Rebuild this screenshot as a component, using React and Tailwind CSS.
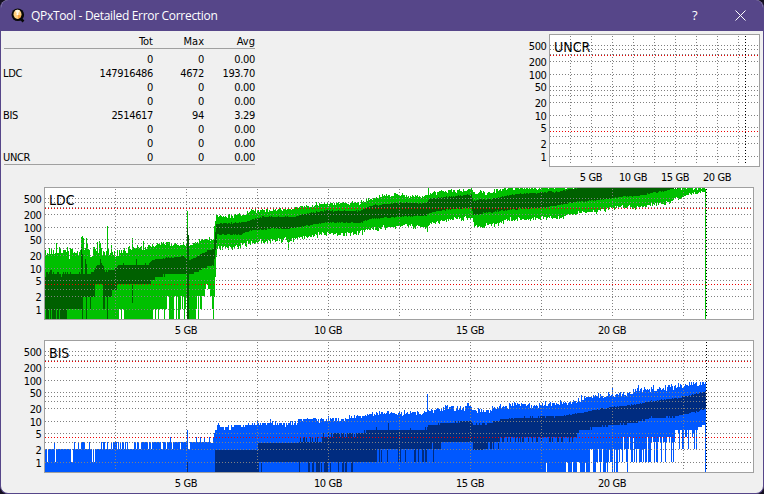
import React from 'react';

const TICKS = [
    {y: 11, label: '500'},
    {y: 15},
    {y: 20},
    {y: 27, label: '200'},
    {y: 40, label: '100'},
    {y: 52, label: '50'},
    {y: 56},
    {y: 61},
    {y: 68, label: '20'},
    {y: 81, label: '10'},
    {y: 93, label: '5'},
    {y: 102},
    {y: 109, label: '2'},
    {y: 122, label: '1'},
];
const LIMITS = [21, 97];
const FLOOR = 132;

const errorRows = [
    {name: '', tot: '0', max: '0', avg: '0.00'},
    {name: 'LDC', tot: '147916486', max: '4672', avg: '193.70'},
    {name: '', tot: '0', max: '0', avg: '0.00'},
    {name: '', tot: '0', max: '0', avg: '0.00'},
    {name: 'BIS', tot: '2514617', max: '94', avg: '3.29'},
    {name: '', tot: '0', max: '0', avg: '0.00'},
    {name: '', tot: '0', max: '0', avg: '0.00'},
    {name: 'UNCR', tot: '0', max: '0', avg: '0.00'},
];

// Curves are [x, y] knots; levels are [from, to, candidate heights]; spikes are {x: y}
const ldc = {
    from: 1,
    to: 661,
    light: '#00c000',
    dark: '#006000',
    top: {
        seed: 7,
        knots: [[1, 64], [70, 65], [76, 65], [85, 61], [104, 61], [116, 57], [141, 57], [146, 58], [156, 54], [166, 52], [169, 52], [170, 41], [172, 29], [194, 29], [205, 25], [222, 23], [250, 22], [262, 20], [276, 17], [315, 16], [326, 12], [341, 9], [356, 8], [366, 9], [381, 10], [386, 7], [396, 5], [416, 4], [427, 3], [429, 6], [446, 6], [456, 3], [471, 1], [661, 1]],
        noise: [[1, 8], [75, 6], [105, 3], [170, 2.5], [661, 2.5]],
        spikes: {12: 56, 25: 72, 37: 50, 38: 49, 39: 51, 42: 51, 43: 57, 53: 55, 55: 54, 56: 56, 63: 39, 67: 58, 88: 51, 99: 54, 143: 24, 144: 48, 338: 7, 358: 6, 384: 1, 427: 1},
    },
    upper: {
        seed: 21,
        knots: [[1, 87], [35, 87], [44, 88], [50, 84], [52, 79], [58, 77], [60, 84], [69, 84], [74, 78], [104, 78], [108, 73], [121, 71], [138, 69], [146, 73], [156, 68], [163, 64], [169, 62], [172, 37], [196, 36], [206, 34], [218, 30], [250, 30], [266, 26], [281, 24], [316, 24], [326, 19], [356, 16], [366, 16], [381, 17], [386, 12], [406, 10], [427, 8], [429, 14], [451, 12], [466, 8], [496, 6], [511, 5], [531, 2], [541, 1], [661, 1]],
        noise: [[1, 4], [50, 1], [661, 1]],
        spikes: {37: 60, 38: 67, 41: 72, 42: 77, 56: 72, 92: 72, 143: 41, 144: 48},
    },
    lower: {
        seed: 5,
        knots: [[1, 122], [38, 122], [39, 109], [50, 109], [51, 98], [58, 98], [61, 109], [67, 109], [68, 102], [81, 97], [106, 97], [108, 93], [116, 90], [126, 88], [146, 89], [156, 83], [163, 80], [169, 79], [171, 64], [173, 48], [196, 48], [206, 44], [226, 42], [246, 42], [261, 39], [281, 36], [316, 36], [326, 32], [356, 30], [381, 29], [386, 26], [401, 23], [427, 21], [429, 28], [456, 24], [476, 22], [501, 21], [511, 19], [533, 15], [556, 13], [576, 10], [596, 9], [616, 5], [636, 1], [661, 1]],
        noise: [[1, 0.4], [50, 0.8], [661, 1]],
        levels: [[1, 23, [122, 132, 132]], [24, 36, [122]]],
        spikes: {37: 122, 38: 132, 42: 132, 46: 122, 59: 122, 60: 122, 63: 132, 88: 116, 143: 132, 144: 132},
    },
    bottom: {
        seed: 13,
        knots: [[1, 132], [169, 132], [170, 109], [172, 72], [173, 60], [186, 62], [196, 60], [206, 56], [226, 54], [250, 53], [256, 51], [276, 48], [311, 47], [326, 43], [356, 39], [366, 39], [383, 41], [386, 37], [406, 33], [428, 31], [430, 40], [451, 38], [456, 35], [466, 33], [501, 31], [516, 31], [531, 27], [556, 24], [576, 20], [591, 21], [606, 18], [621, 17], [631, 12], [646, 8], [661, 4]],
        noise: [[1, 0], [173, 3.5], [520, 3], [620, 3], [661, 1]],
        levels: [[108, 122, [132, 132, 122]], [122, 142, [109, 132, 122, 132]], [145, 150, [132]], [151, 157, [122, 109, 132]], [157, 168, [109, 122, 97, 102]]],
        spikes: {75: 122, 76: 122, 78: 122, 79: 122, 244: 63, 383: 45, 661: 132},
    },
};

const bis = {
    from: 1,
    to: 661,
    light: '#0058ff',
    dark: '#002c80',
    top: {
        seed: 31,
        knots: [[1, 109], [168, 102], [169, 97], [173, 88], [174, 84], [178, 88], [196, 87], [211, 84], [251, 84], [256, 80], [276, 80], [304, 79], [316, 76], [332, 73], [356, 73], [376, 73], [386, 71], [396, 68], [420, 68], [424, 65], [428, 68], [431, 71], [446, 70], [456, 67], [471, 65], [496, 65], [516, 63], [536, 61], [546, 56], [568, 56], [581, 54], [596, 50], [611, 49], [631, 47], [646, 44], [661, 42]],
        noise: [[1, 0], [173, 3], [661, 4]],
        levels: [[1, 55, [109, 109, 109, 109, 109, 102]], [56, 105, [109, 102]], [106, 147, [102, 102, 102, 109]], [148, 166, [102, 102, 102, 97]]],
        spikes: {3: 122, 11: 122, 27: 122, 28: 122, 48: 122, 50: 122, 37: 102, 38: 102, 39: 102, 40: 102, 126: 97, 143: 90, 174: 83, 213: 81, 226: 79, 383: 54, 384: 70, 424: 63, 534: 58, 537: 55, 568: 48, 594: 45},
    },
    upper: {
        seed: 42,
        knots: [[1, 132], [170, 132], [171, 109], [213, 109], [215, 102], [255, 102], [277, 98], [285, 94], [312, 93], [331, 91], [361, 90], [382, 90], [384, 86], [396, 84], [416, 82], [427, 81], [429, 85], [446, 84], [456, 80], [476, 78], [516, 77], [531, 74], [556, 69], [576, 66], [596, 64], [611, 61], [636, 58], [661, 52]],
        noise: [[1, 0], [312, 0.8], [661, 1]],
        levels: [[255, 277, [102, 102, 97]], [278, 312, [97, 93, 93]]],
        spikes: {143: 122, 332: 87, 344: 83, 366: 88, 381: 87},
    },
    lower: {
        seed: 17,
        knots: [[1, 132], [214, 132], [215, 122], [331, 122], [332, 109], [396, 109], [398, 102], [428, 102], [429, 109], [441, 109], [453, 102], [471, 102], [478, 97], [532, 97], [536, 91], [556, 87], [576, 85], [596, 82], [606, 78], [626, 78], [646, 73], [661, 69]],
        noise: [[1, 0], [535, 1.2], [661, 1.2]],
        levels: [[215, 260, [122]], [261, 312, [122, 122, 132]], [332, 384, [109, 109, 109, 109, 122]], [385, 397, [109, 109, 102]], [398, 428, [102]], [440, 454, [102, 109]], [455, 530, [97, 97, 102]]],
        spikes: {217: 132, 143: 132, 255: 132, 389: 122},
    },
    bottom: {
        seed: 90,
        knots: [[1, 132], [563, 122], [588, 109], [610, 102], [628, 97], [640, 95], [650, 90], [661, 85]],
        noise: [[1, 0], [590, 0], [640, 2], [661, 1]],
        levels: [[1, 519, [132]], [520, 540, [132, 132, 132, 122]], [541, 563, [132, 132, 122, 109]], [564, 576, [122, 132, 122, 109]], [577, 594, [109, 122, 109, 97]], [595, 605, [97, 109, 122]], [606, 630, [97, 122, 102, 97, 102]], [631, 652, [90, 90, 93, 97, 109]]],
        spikes: {502: 122, 522: 122, 528: 122, 533: 122, 583: 132, 661: 132},
    },
};

const interpolate = (knots, x) => {
    const i = knots.findIndex(k => k[0] >= x);
    if (i <= 0) return knots[i === 0 ? 0 : knots.length - 1][1];
    const [x0, y0] = knots[i - 1];
    const [x1, y1] = knots[i];
    return y0 + (y1 - y0) * (x - x0) / (x1 - x0);
};

// Error counts are whole numbers, so low values land on fixed heights
const snap = y => {
    if (y > 127) return FLOOR;
    const count = Math.max(1, Math.round(Math.pow(10, (122.4 - y) / 41)));
    return Math.max(1, Math.floor(122.6 - 41 * Math.log10(count)));
};

const sample = (curve, from, to) => {
    let state = curve.seed;
    const random = () => {
        state = (state * 16807) % 2147483647;
        return state / 2147483647;
    };
    for (let i = 0; i < 5; i++) random();
    const values = [];
    for (let x = from; x <= to; x++) {
        const r = random();
        const r2 = random();
        const level = (curve.levels || []).find(l => x >= l[0] && x <= l[1]);
        if (curve.spikes[x] !== undefined) values.push(curve.spikes[x]);
        else if (level) values.push(level[2][Math.floor(r * level[2].length)]);
        else values.push(snap(interpolate(curve.knots, x) + (r + r2 - 1) * interpolate(curve.noise, x)));
    }
    return values;
};

const columns = (top, bottom, from) => top
    .map((y, i) => bottom[i] > y ? `M${from + i} ${y}h1V${bottom[i]}h-1z` : '')
    .join('');

const series = ({from, to, top, upper, lower, bottom, light, dark}) => [
    {fill: light, d: columns(sample(top, from, to), sample(bottom, from, to), from)},
    {fill: dark, d: columns(sample(upper, from, to), sample(lower, from, to), from)},
];

const ErrorChart = ({title, width, step, end, bands = []}) => {
    const verticals = Array.from({length: 9}, (_, i) => (i + 1) * step);
    return (
        <svg width={width + 43} height="153" viewBox={`-43 0 ${width + 43} 153`}
             className="block shrink-0 font-['DejaVu_Sans_Condensed','Noto_Sans',sans-serif] text-[11px] tracking-[-0.4px]">
            <g shapeRendering="crispEdges">
                <rect x="0" y="0" width={width} height="133" fill="#a0a0a0"/>
                <rect x="1" y="1" width={width - 2} height="131" fill="#fff"/>
                {bands.map(band => <path key={band.fill} d={band.d} fill={band.fill}/>)}
                <g stroke="#808080" strokeDasharray="1 2">
                    {TICKS.map(t => <path key={t.y} d={`M1 ${t.y + 0.5}H${width - 2}`}/>)}
                    {verticals.map(x => <path key={x} d={`M${x + 0.5} 2V131`}/>)}
                </g>
                {LIMITS.map(y => (
                    <path key={y} d={`M1 ${y + 0.5}H${width - 2}`} stroke="#f00000" strokeDasharray="1 2"/>
                ))}
                <path d={`M${end + 0.5} 2V131`} stroke="#000" strokeDasharray="1 2"/>
            </g>
            {TICKS.filter(t => t.label).map(t => (
                <text key={t.y} x="-2.5" y={t.y + 5} textAnchor="end">{t.label}</text>
            ))}
            {[5, 10, 15, 20].map((gb, i) => (
                <text key={gb} x={(i + 1) * step * 2} y="147" textAnchor="middle">{gb} GB</text>
            ))}
            <text x="5" y="18" className="text-[14px] tracking-[0px]">{title}</text>
        </svg>
    );
};

const TitleBar = () => (
    <div className="flex h-[31px] shrink-0 items-center bg-[#564689] pl-[10px] text-white">
        <svg width="14" height="15" viewBox="0 0 14 15" className="mr-[6px]">
            <circle cx="6.8" cy="6.7" r="6.3" fill="#080808"/>
            <path d="M8 9l4.5 4.5" stroke="#080808" strokeWidth="2.5"/>
            <ellipse cx="6.5" cy="6.3" rx="4" ry="4.6" fill="#ffd080"/>
            <path d="M6.5 6.3L4 2.8a4 4.6 0 0 1 5 0z" fill="#fff6dc"/>
            <path d="M6.5 6.3l3.8 1.5a4 4.6 0 0 1-3 3z" fill="#f6a646"/>
            <circle cx="6.5" cy="6.3" r="1" fill="#fff"/>
        </svg>
        <span className="font-['Open_Sans','Noto_Sans',sans-serif] text-[12px] leading-none tracking-[-0.31px]">
            QPxTool - Detailed Error Correction
        </span>
        <span className="ml-auto w-[43px] font-['Open_Sans',sans-serif] text-[13px] leading-none">?</span>
        <svg width="11" height="11" viewBox="0 0 11 11" className="mr-[17px]" stroke="#fff" strokeWidth="1">
            <path d="M.5.5l10 10M10.5.5l-10 10"/>
        </svg>
    </div>
);

const ErrorTable = () => (
    <div className="ml-[2px] w-[252px] font-['DejaVu_Sans_Condensed','Noto_Sans',sans-serif] text-[11px] leading-[14px] tracking-[-0.35px] text-black">
        <div className="ml-px flex h-[18px] w-[251px] border-b border-[#a0a0a0] pt-[4px] text-right">
            <span className="w-[149px] tracking-normal">Tot</span>
            <span className="w-[51px] tracking-normal">Max</span>
            <span className="w-[51px] tracking-normal">Avg</span>
        </div>
        <div className="h-[115px] pt-[4px]">
            {errorRows.map((row, i) => (
                <div key={i} className="flex h-[14px] text-right">
                    <span className="w-[50px] text-left">{row.name}</span>
                    <span className="w-[100px]">{row.tot}</span>
                    <span className="w-[51px]">{row.max}</span>
                    <span className="w-[51px]">{row.avg}</span>
                </div>
            ))}
        </div>
        <div className="ml-px h-px w-[251px] bg-[#a0a0a0]"/>
    </div>
);

const App = () => {
    return (
        <div className="h-[494px] w-[764px] bg-[#141020]">
            <div className="flex h-full w-full flex-col overflow-hidden rounded-lg border border-t-0 border-[#564689] bg-[#f0f0f0]">
                <TitleBar/>
                <div className="flex h-[156px] shrink-0 justify-between pr-[3px]">
                    <ErrorTable/>
                    <div className="pt-[3px]">
                        <ErrorChart title="UNCR" width={211} step={21} end={196}/>
                    </div>
                </div>
                <ErrorChart title="LDC" width={710} step={71} end={662} bands={series(ldc)}/>
                <ErrorChart title="BIS" width={710} step={71} end={662} bands={series(bis)}/>
            </div>
        </div>
    );
};

export default App;
